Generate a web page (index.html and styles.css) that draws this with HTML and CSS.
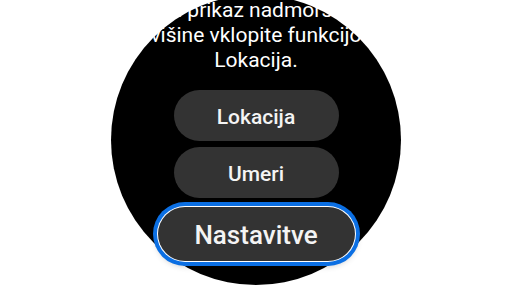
FILE: index.html
```html
<!DOCTYPE html>
<html lang="sl">
<head>
<meta charset="utf-8">
<title>Nadmorska višina</title>
<link rel="stylesheet" href="styles.css">
</head>
<body>
<div class="watch">
  <p class="msg">Za prikaz nadmorske<br>višine vklopite funkcijo<br>Lokacija.</p>
  <div class="btn btn-first">Lokacija</div>
  <div class="btn btn-second">Umeri</div>
  <div class="btn btn-focus">Nastavitve</div>
</div>
</body>
</html>
```

FILE: styles.css
```css
html, body {
  margin: 0;
  padding: 0;
  background: #ffffff;
}
body {
  width: 512px;
  height: 288px;
  overflow: hidden;
  font-family: Roboto, "Noto Sans", sans-serif;
}
.watch {
  width: 290px;
  height: 290px;
  margin: -5px auto 0;
  border-radius: 50%;
  background: #000000;
  box-sizing: border-box;
  padding-top: 3px;
  display: flex;
  flex-direction: column;
  align-items: center;
}
.msg {
  margin: 0 0 17px;
  color: #ffffff;
  font-size: 21px;
  line-height: 25px;
  text-align: center;
  white-space: nowrap;
}
.btn {
  flex: none;
  display: flex;
  align-items: center;
  justify-content: center;
  box-sizing: border-box;
  background: #333333;
  color: #f4f4f4;
  font-weight: 500;
  border-radius: 999px;
}
.btn-first,
.btn-second {
  width: 165px;
  height: 51px;
  font-size: 21px;
  padding-top: 3px;
}
.btn-second {
  margin-top: 6px;
}
.btn-focus {
  width: 197px;
  height: 54px;
  margin-top: 9px;
  font-size: 26px;
  padding-top: 1px;
  box-shadow: 0 0 0 1px #ffffff, 0 0 0 5px #0b6fe3, 0 3px 7px 1px rgba(0, 0, 0, 0.3);
}
```
